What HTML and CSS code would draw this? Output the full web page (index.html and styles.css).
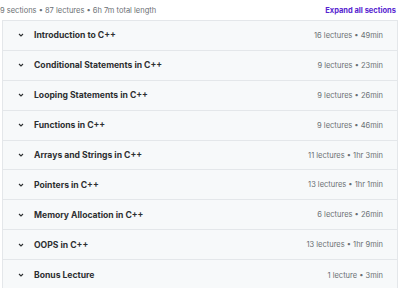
FILE: index.html
```html
<!DOCTYPE html>
<html lang="en">
<head>
  <meta charset="UTF-8">
  <title>Course content</title>
  <link rel="stylesheet" href="styles.css">
</head>
<body>
  <div class="summary">
    <span class="stats">9 sections • 87 lectures • 6h 7m total length</span>
    <button class="expand">Expand all sections</button>
  </div>
  <div class="sections">
    <div class="section"><span class="chev"><svg viewBox="0 0 10 10"><path d="M3 4 5 6 7 4"/></svg></span><span class="title">Introduction to C++</span><span class="meta">16 lectures • 49min</span></div>
    <div class="section"><span class="chev"><svg viewBox="0 0 10 10"><path d="M3 4 5 6 7 4"/></svg></span><span class="title">Conditional Statements in C++</span><span class="meta">9 lectures • 23min</span></div>
    <div class="section"><span class="chev"><svg viewBox="0 0 10 10"><path d="M3 4 5 6 7 4"/></svg></span><span class="title">Looping Statements in C++</span><span class="meta">9 lectures • 26min</span></div>
    <div class="section"><span class="chev"><svg viewBox="0 0 10 10"><path d="M3 4 5 6 7 4"/></svg></span><span class="title">Functions in C++</span><span class="meta">9 lectures • 46min</span></div>
    <div class="section"><span class="chev"><svg viewBox="0 0 10 10"><path d="M3 4 5 6 7 4"/></svg></span><span class="title">Arrays and Strings in C++</span><span class="meta">11 lectures • 1hr 3min</span></div>
    <div class="section"><span class="chev"><svg viewBox="0 0 10 10"><path d="M3 4 5 6 7 4"/></svg></span><span class="title">Pointers in C++</span><span class="meta">13 lectures • 1hr 1min</span></div>
    <div class="section"><span class="chev"><svg viewBox="0 0 10 10"><path d="M3 4 5 6 7 4"/></svg></span><span class="title">Memory Allocation in C++</span><span class="meta">6 lectures • 26min</span></div>
    <div class="section"><span class="chev"><svg viewBox="0 0 10 10"><path d="M3 4 5 6 7 4"/></svg></span><span class="title">OOPS in C++</span><span class="meta">13 lectures • 1hr 9min</span></div>
    <div class="section"><span class="chev"><svg viewBox="0 0 10 10"><path d="M3 4 5 6 7 4"/></svg></span><span class="title">Bonus Lecture</span><span class="meta">1 lecture • 3min</span></div>
  </div>
</body>
</html>
```

FILE: styles.css
```css
* {
  box-sizing: border-box;
  margin: 0;
  padding: 0;
}
body {
  font-family: Inter, 'Noto Sans', sans-serif;
  background: #fff;
  color: #2d2f31;
  padding: 2px 2px 0 2px;
}
.summary {
  display: flex;
  justify-content: space-between;
  align-items: center;
  height: 17px;
  margin: 0 2px 1px -2px;
}
.stats {
  font-size: 7.5px;
  color: #6a6f73;
}
.expand {
  border: none;
  background: none;
  font-family: inherit;
  font-size: 7.5px;
  font-weight: 700;
  color: #5624d0;
  cursor: pointer;
}
.sections {
  border: 1px solid #e4e7ea;
}
.section {
  display: flex;
  align-items: center;
  height: 29.9px;
  padding: 0 14px 0 13px;
  background: #f7f9fa;
  border-bottom: 1px solid #e4e7ea;
}
.section:last-child {
  border-bottom: none;
}
.chev {
  width: 10px;
  height: 10px;
  margin-right: 8px;
  display: flex;
}
.chev svg {
  width: 10px;
  height: 10px;
  fill: none;
  stroke: #2d2f31;
  stroke-width: 1.1;
}
.title {
  flex: 1;
  font-size: 8.6px;
  font-weight: 700;
}
.meta {
  font-size: 7.5px;
  color: #6a6f73;
}
```
